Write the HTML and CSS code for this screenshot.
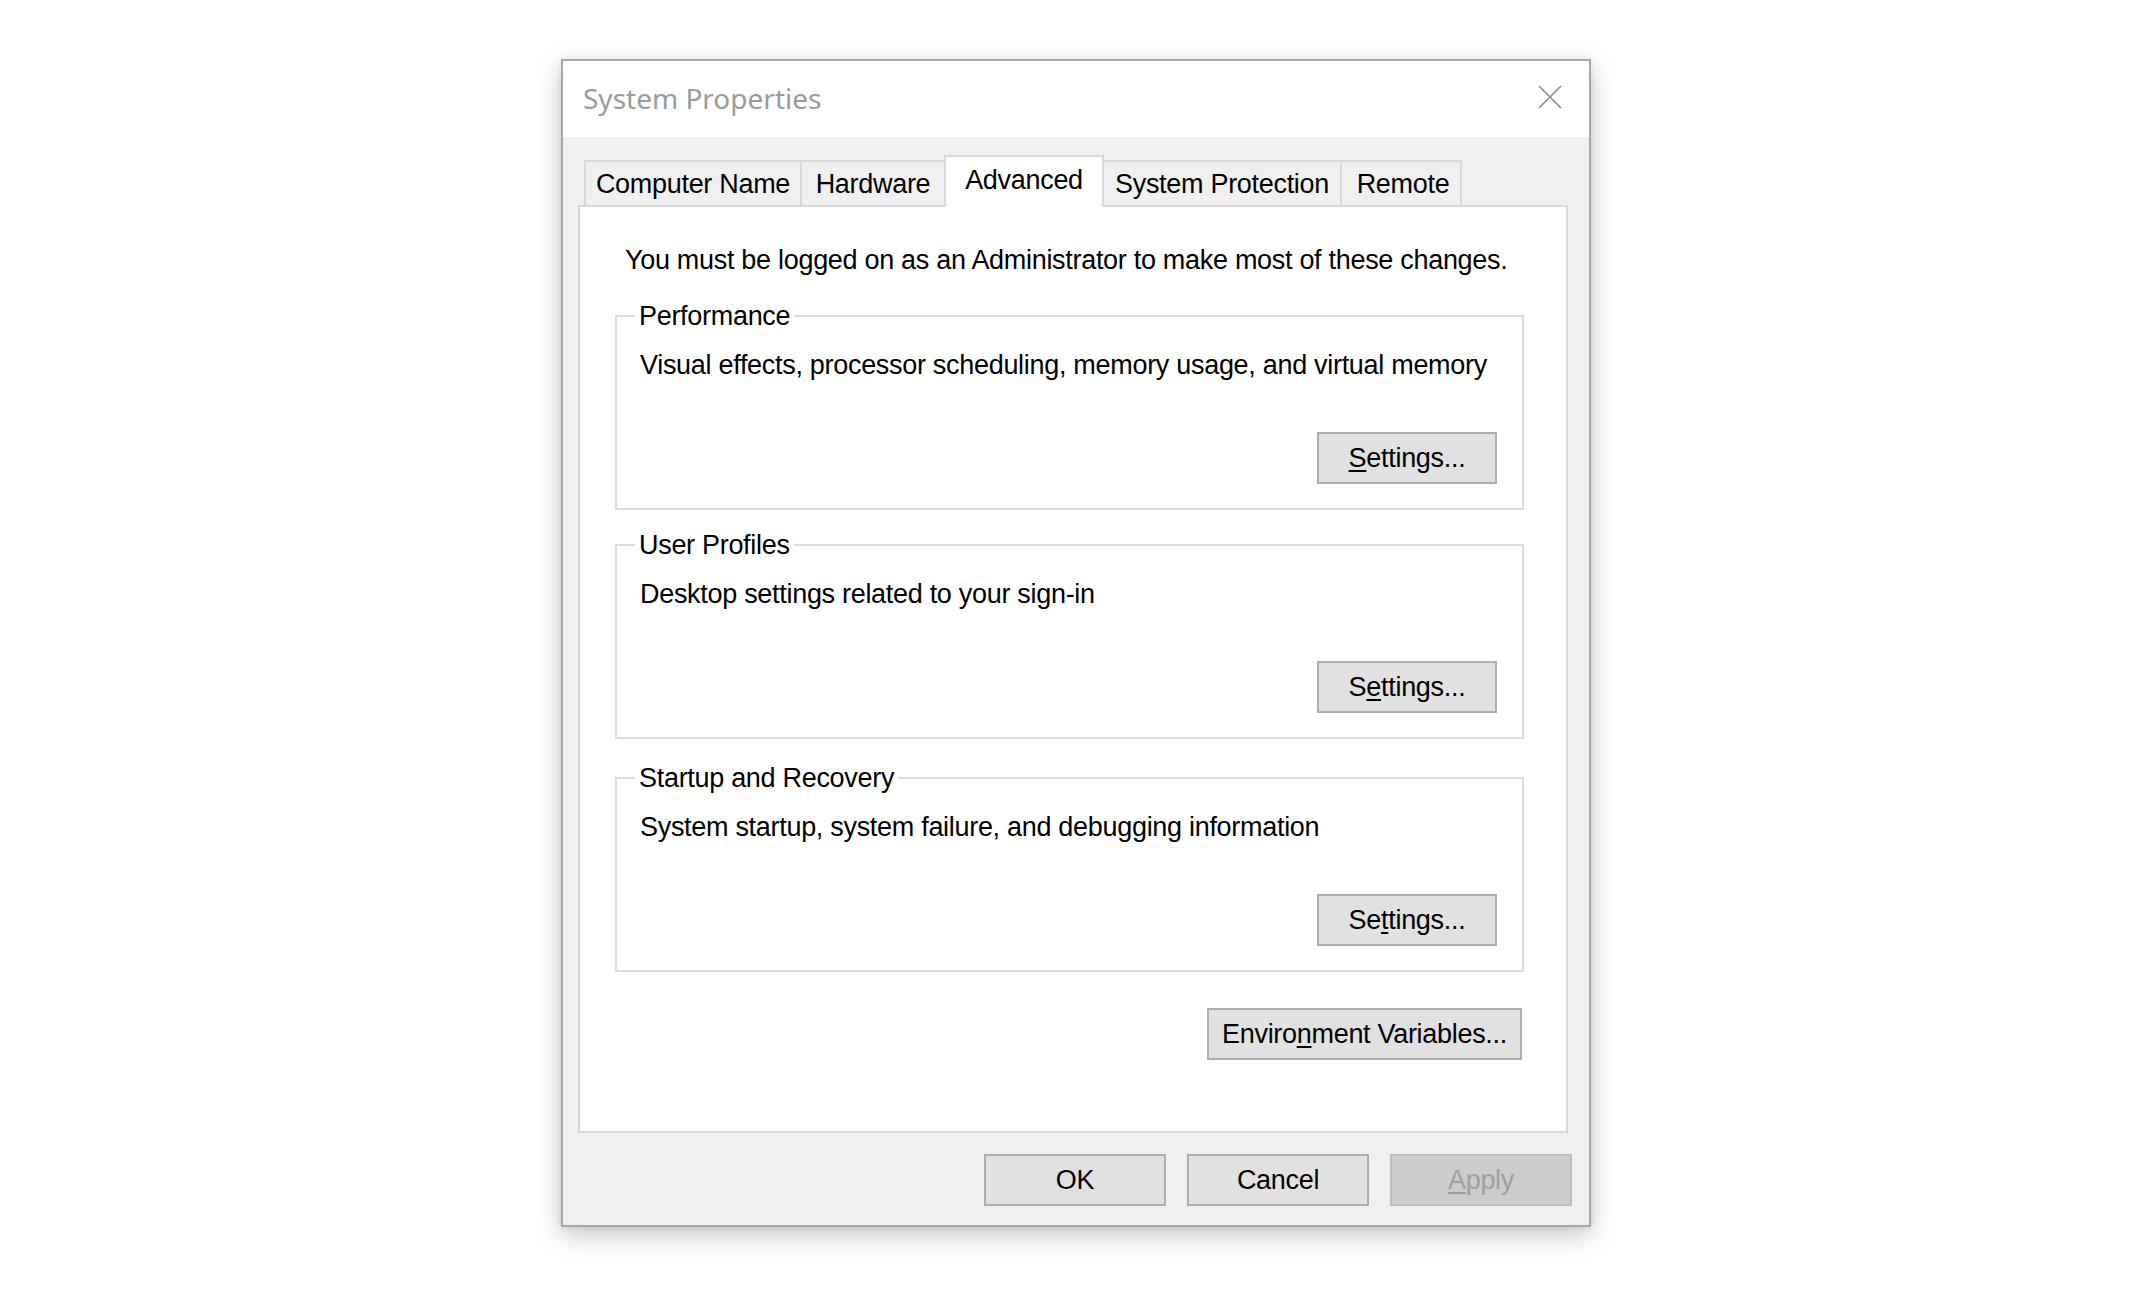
FILE: index.html
```html
<!DOCTYPE html>
<html lang="en">
<head>
<meta charset="utf-8">
<title>System Properties</title>
<link rel="stylesheet" href="styles.css">
</head>
<body>
<div class="stage">
  <div class="dialog">
    <div class="titlebar">
      <span class="title">System Properties</span>
      <svg class="close" width="24" height="24" viewBox="0 0 24 24" aria-hidden="true">
        <path d="M1 1L23 23M23 1L1 23" stroke="#8c8c8c" stroke-width="1.6" fill="none"/>
      </svg>
    </div>
    <div class="body">
      <div class="tabs">
        <div class="tab tab-cn">Computer Name</div>
        <div class="tab tab-hw">Hardware</div>
        <div class="tab tab-adv active">Advanced</div>
        <div class="tab tab-sp">System Protection</div>
        <div class="tab tab-rm">Remote</div>
      </div>
      <div class="panel">
        <p class="note">You must be logged on as an Administrator to make most of these changes.</p>
        <fieldset class="group group-first">
          <legend>Performance</legend>
          <p class="desc">Visual effects, processor scheduling, memory usage, and virtual memory</p>
          <div class="row"><button class="btn btn-settings"><u>S</u>ettings...</button></div>
        </fieldset>
        <fieldset class="group">
          <legend>User Profiles</legend>
          <p class="desc">Desktop settings related to your sign-in</p>
          <div class="row"><button class="btn btn-settings">S<u>e</u>ttings...</button></div>
        </fieldset>
        <fieldset class="group">
          <legend>Startup and Recovery</legend>
          <p class="desc">System startup, system failure, and debugging information</p>
          <div class="row"><button class="btn btn-settings">Se<u>t</u>tings...</button></div>
        </fieldset>
        <div class="row env-row"><button class="btn btn-env">Enviro<u>n</u>ment Variables...</button></div>
      </div>
      <div class="actions">
        <button class="btn btn-action">OK</button>
        <button class="btn btn-action">Cancel</button>
        <button class="btn btn-action disabled"><u>A</u>pply</button>
      </div>
    </div>
  </div>
</div>
</body>
</html>
```

FILE: styles.css
```css
html, body {
  margin: 0;
  padding: 0;
  background: #ffffff;
}

body {
  width: 2154px;
  height: 1304px;
  overflow: hidden;
  font-family: "Liberation Sans", Arial, sans-serif;
  font-size: 27px;
  letter-spacing: -0.3px;
  color: #000;
}

.stage {
  padding: 59px 0 0 561px;
}

.dialog {
  box-sizing: border-box;
  width: 1030px;
  height: 1168px;
  border: 2px solid #a6a6a6;
  background: #f0f0f0;
  box-shadow: 0 8px 26px rgba(0, 0, 0, 0.22), 0 2px 6px rgba(0, 0, 0, 0.08);
  display: flex;
  flex-direction: column;
}

.titlebar {
  height: 76px;
  background: #ffffff;
  display: flex;
  align-items: center;
  justify-content: space-between;
  padding: 0 27px 0 20px;
}

.title {
  font-family: "Noto Sans", "Liberation Sans", sans-serif;
  font-size: 28px;
  letter-spacing: 0;
  color: #9b9b9b;
  margin-top: -2px;
}

.close {
  display: block;
  margin-bottom: 4px;
}

.body {
  flex: 1;
  padding: 18px 21px 0 15px;
  display: flex;
  flex-direction: column;
}

.tabs {
  display: flex;
  align-items: flex-end;
  height: 50px;
  margin-left: 6px;
}

.tab {
  box-sizing: border-box;
  height: 45px;
  border: 2px solid #d9d9d9;
  border-bottom: none;
  background: #f0f0f0;
  display: flex;
  align-items: center;
  justify-content: center;
  line-height: 32px;
  white-space: nowrap;
  margin-left: -2px;
}

.tab-cn { width: 218px; margin-left: 0; }
.tab-hw { width: 146px; }
.tab-adv { width: 160px; }
.tab-sp { width: 240px; }
.tab-rm { width: 122px; padding-left: 4px; }

.tab.active {
  position: relative;
  z-index: 1;
  height: 52px;
  margin-bottom: -2px;
  background: #ffffff;
  align-items: flex-start;
  padding-top: 7px;
}

.panel {
  box-sizing: border-box;
  height: 928px;
  border: 2px solid #d9d9d9;
  background: #ffffff;
  padding: 37px 42px 0 35px;
  display: flex;
  flex-direction: column;
}

.note {
  margin: 0 0 24px 10px;
  line-height: 32px;
  white-space: nowrap;
}

.group {
  margin: 0 0 23px 0;
  min-width: 0;
  border: 2px solid #dcdcdc;
  padding: 17px 25px 24px 23px;
}

.group-first {
  margin-bottom: 19px;
}

.group legend {
  padding: 0 4px;
  margin-left: -5px;
  line-height: 32px;
}

.desc {
  margin: 0;
  line-height: 32px;
  white-space: nowrap;
}

.row {
  display: flex;
  justify-content: flex-end;
}

.group .row {
  margin-top: 51px;
}

.btn {
  box-sizing: border-box;
  height: 52px;
  border: 2px solid #adadad;
  background: #e1e1e1;
  font: inherit;
  letter-spacing: -0.3px;
  color: #000;
  padding: 0;
  line-height: 46px;
  text-align: center;
  white-space: nowrap;
}

.btn u {
  text-underline-offset: 3px;
}

.btn-settings {
  width: 180px;
}

.env-row {
  margin-top: 13px;
  padding-right: 2px;
}

.btn-env {
  width: 315px;
}

.actions {
  display: flex;
  justify-content: flex-end;
  gap: 21px;
  margin: 21px -4px 0 0;
}

.btn-action {
  width: 182px;
}

.btn-action.disabled {
  background: #cccccc;
  border-color: #bfbfbf;
  color: #a0a0a0;
}
```
